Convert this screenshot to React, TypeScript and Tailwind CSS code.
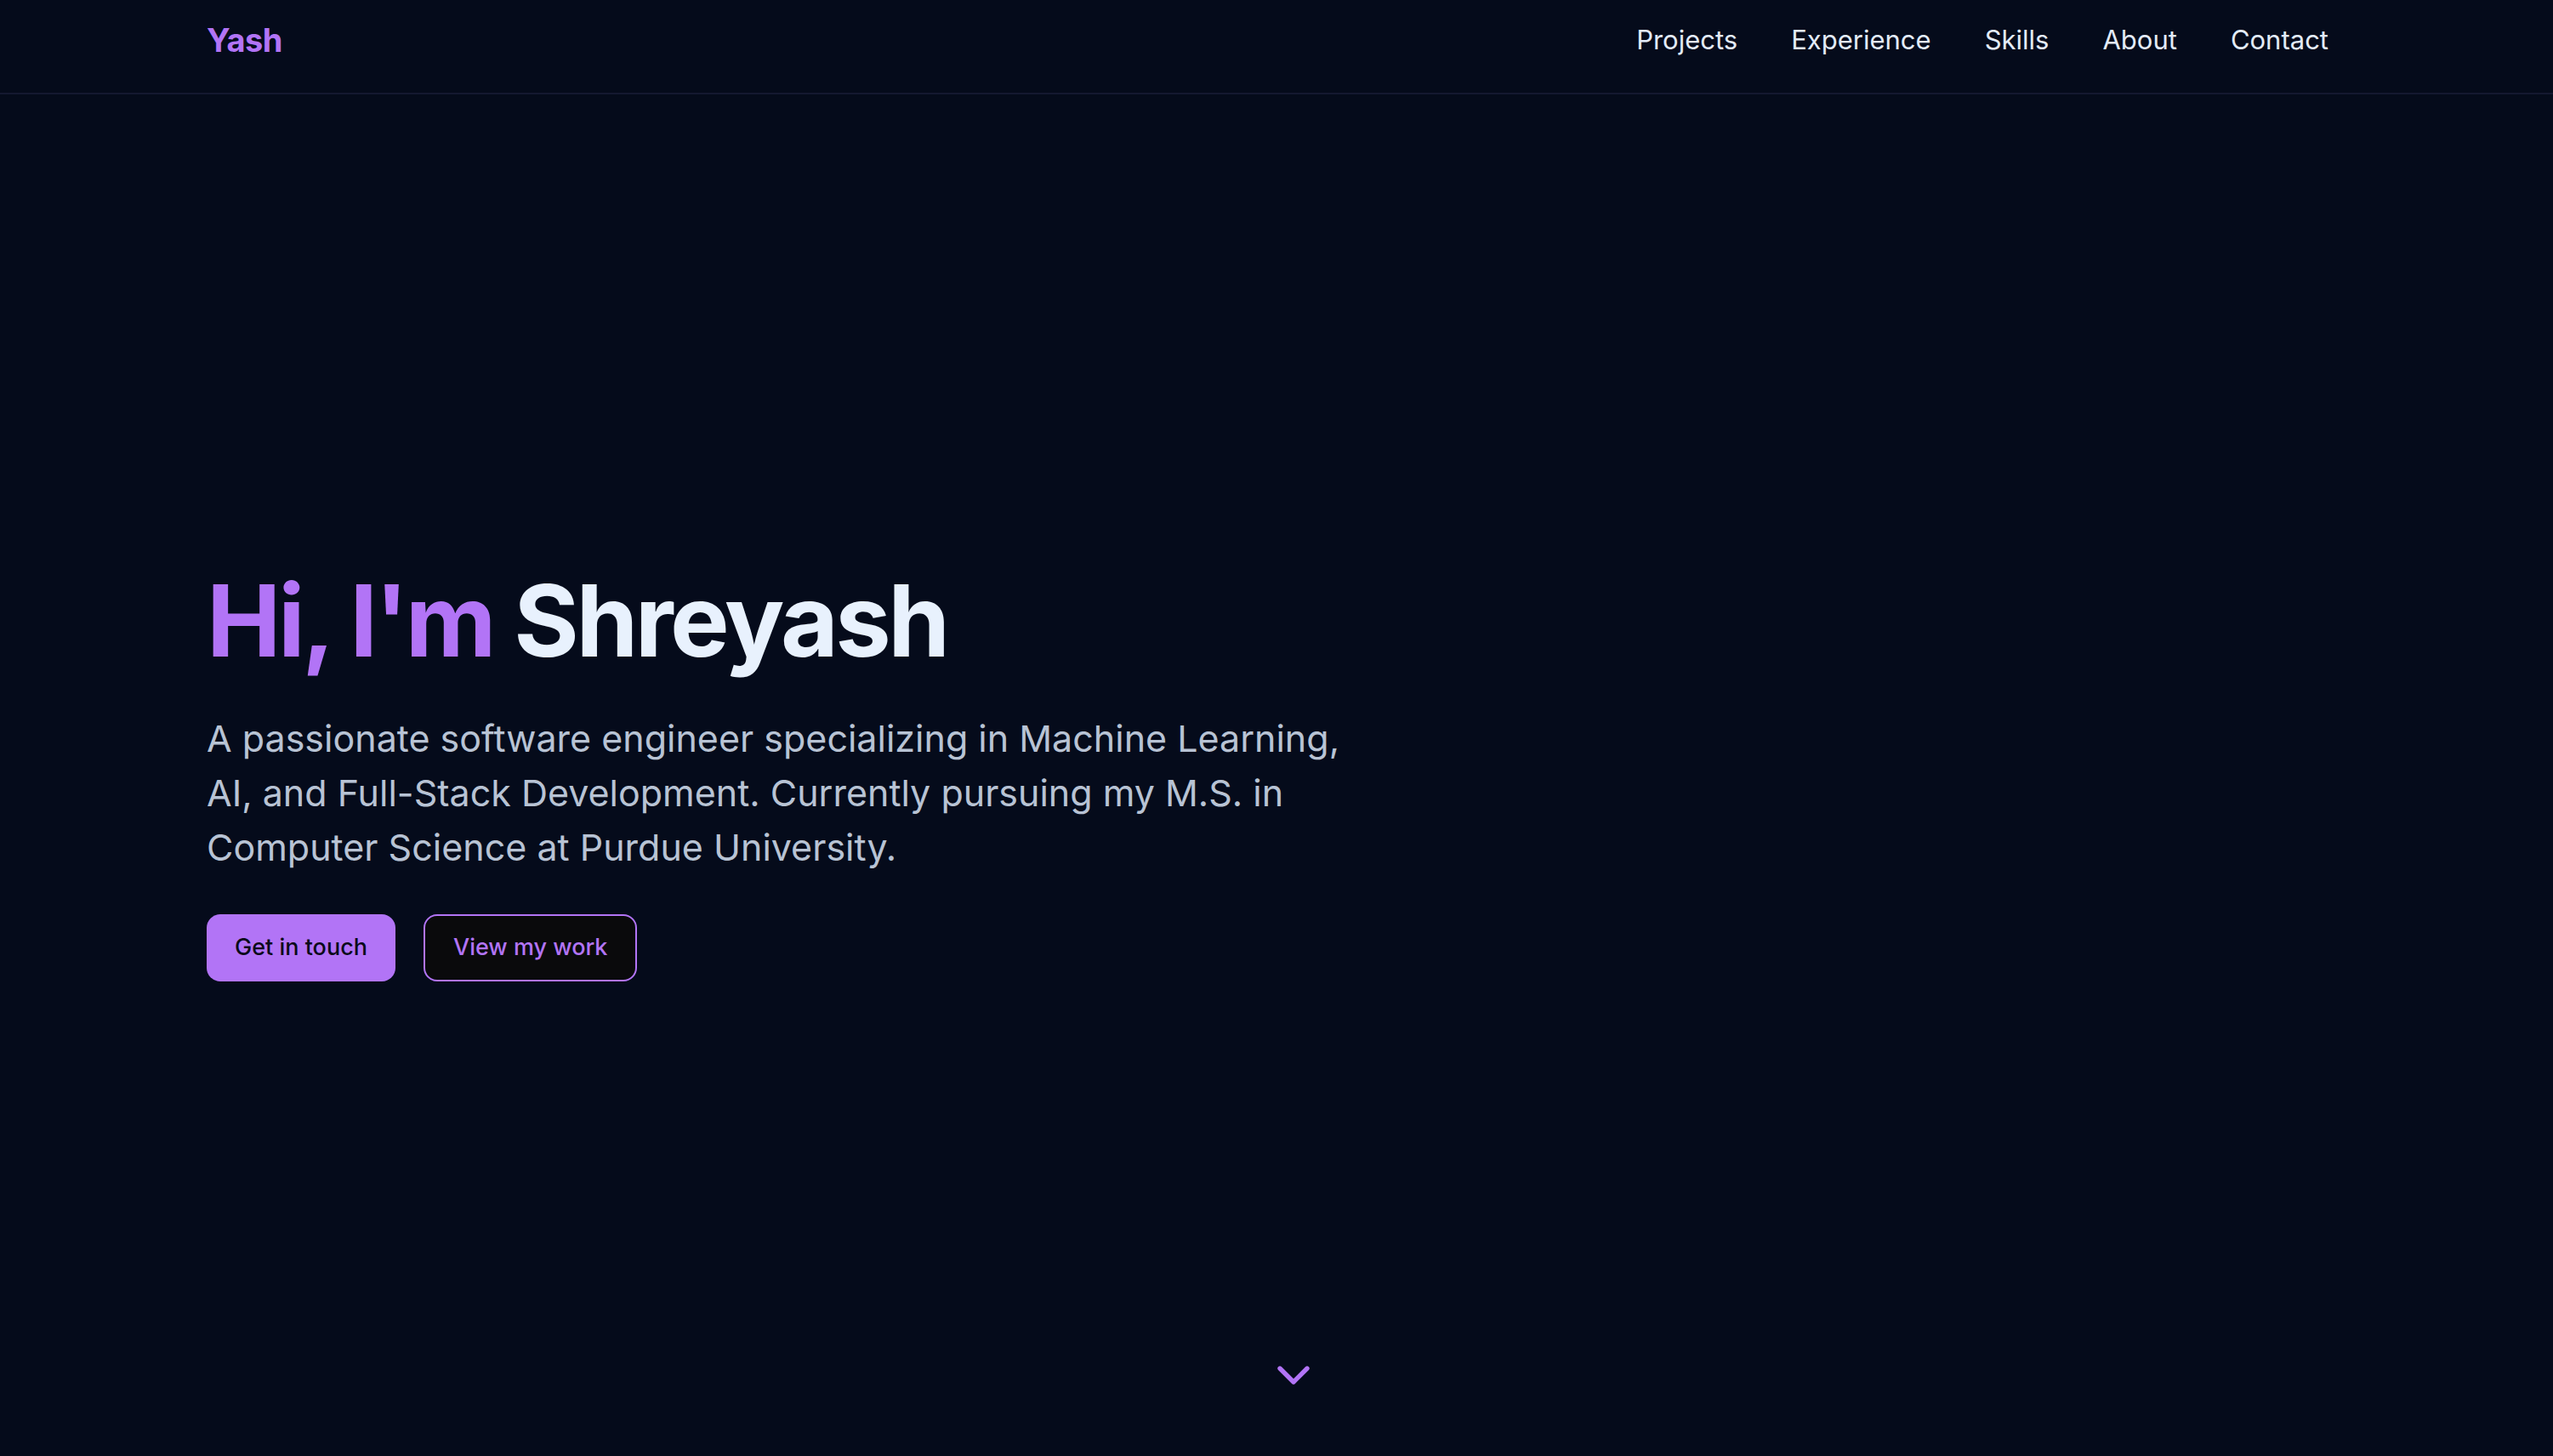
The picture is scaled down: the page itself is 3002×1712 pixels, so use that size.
import { ChevronDown } from "lucide-react";

export default function App() {
  const links = ["Projects", "Experience", "Skills", "About", "Contact"];

  return (
    <div className="relative flex h-screen flex-col bg-[#050b1b] font-['Inter',sans-serif] antialiased">
      {/* Top bar */}
      <header className="h-[111px] border-b-2 border-[#141830]">
        <div className="mt-[19px] flex h-[56px] items-center justify-between pl-[243px] pr-[264px]">
          <span className="text-[38px] font-bold leading-[56px] tracking-[-0.5px] text-[#b274f6]">Yash</span>
          <nav className="flex items-center gap-[63px]">
            {links.map((name) => (
              <a key={name} className="text-[31px] leading-[48px] text-[#e3ebf8]">
                {name}
              </a>
            ))}
          </nav>
        </div>
      </header>

      {/* Hero */}
      <main className="flex flex-1 items-center pl-[243px]">
        <div>
          <h1 className="text-[117px] font-bold leading-[120px] tracking-[-3.5px]">
            <span className="text-[#b274f6]">Hi, I'm </span>
            <span className="text-[#e8f1fd]">Shreyash</span>
          </h1>
          <p className="mt-[46px] max-w-[1360px] text-[43px] leading-[64px] text-[#b8c3d4]">
            A passionate software engineer specializing in Machine Learning, AI, and Full-Stack
            Development. Currently pursuing my M.S. in Computer Science at Purdue University.
          </p>
          <div className="mt-[47px] flex gap-[33px]">
            <button className="h-[79px] rounded-[16px] bg-[#b274f6] px-[33px] text-[27px] font-medium text-[#0b0b1a]">
              Get in touch
            </button>
            <button className="h-[79px] rounded-[16px] border-2 border-[#b274f6] bg-[#0a0a0c] px-[33px] text-[27px] font-medium text-[#b274f6]">
              View my work
            </button>
          </div>
        </div>
      </main>

      {/* Scroll hint */}
      <div className="absolute bottom-[63px] left-1/2 ml-[-12px]">
        <ChevronDown size={64} strokeWidth={2} className="text-[#b274f6]" />
      </div>
    </div>
  );
}
